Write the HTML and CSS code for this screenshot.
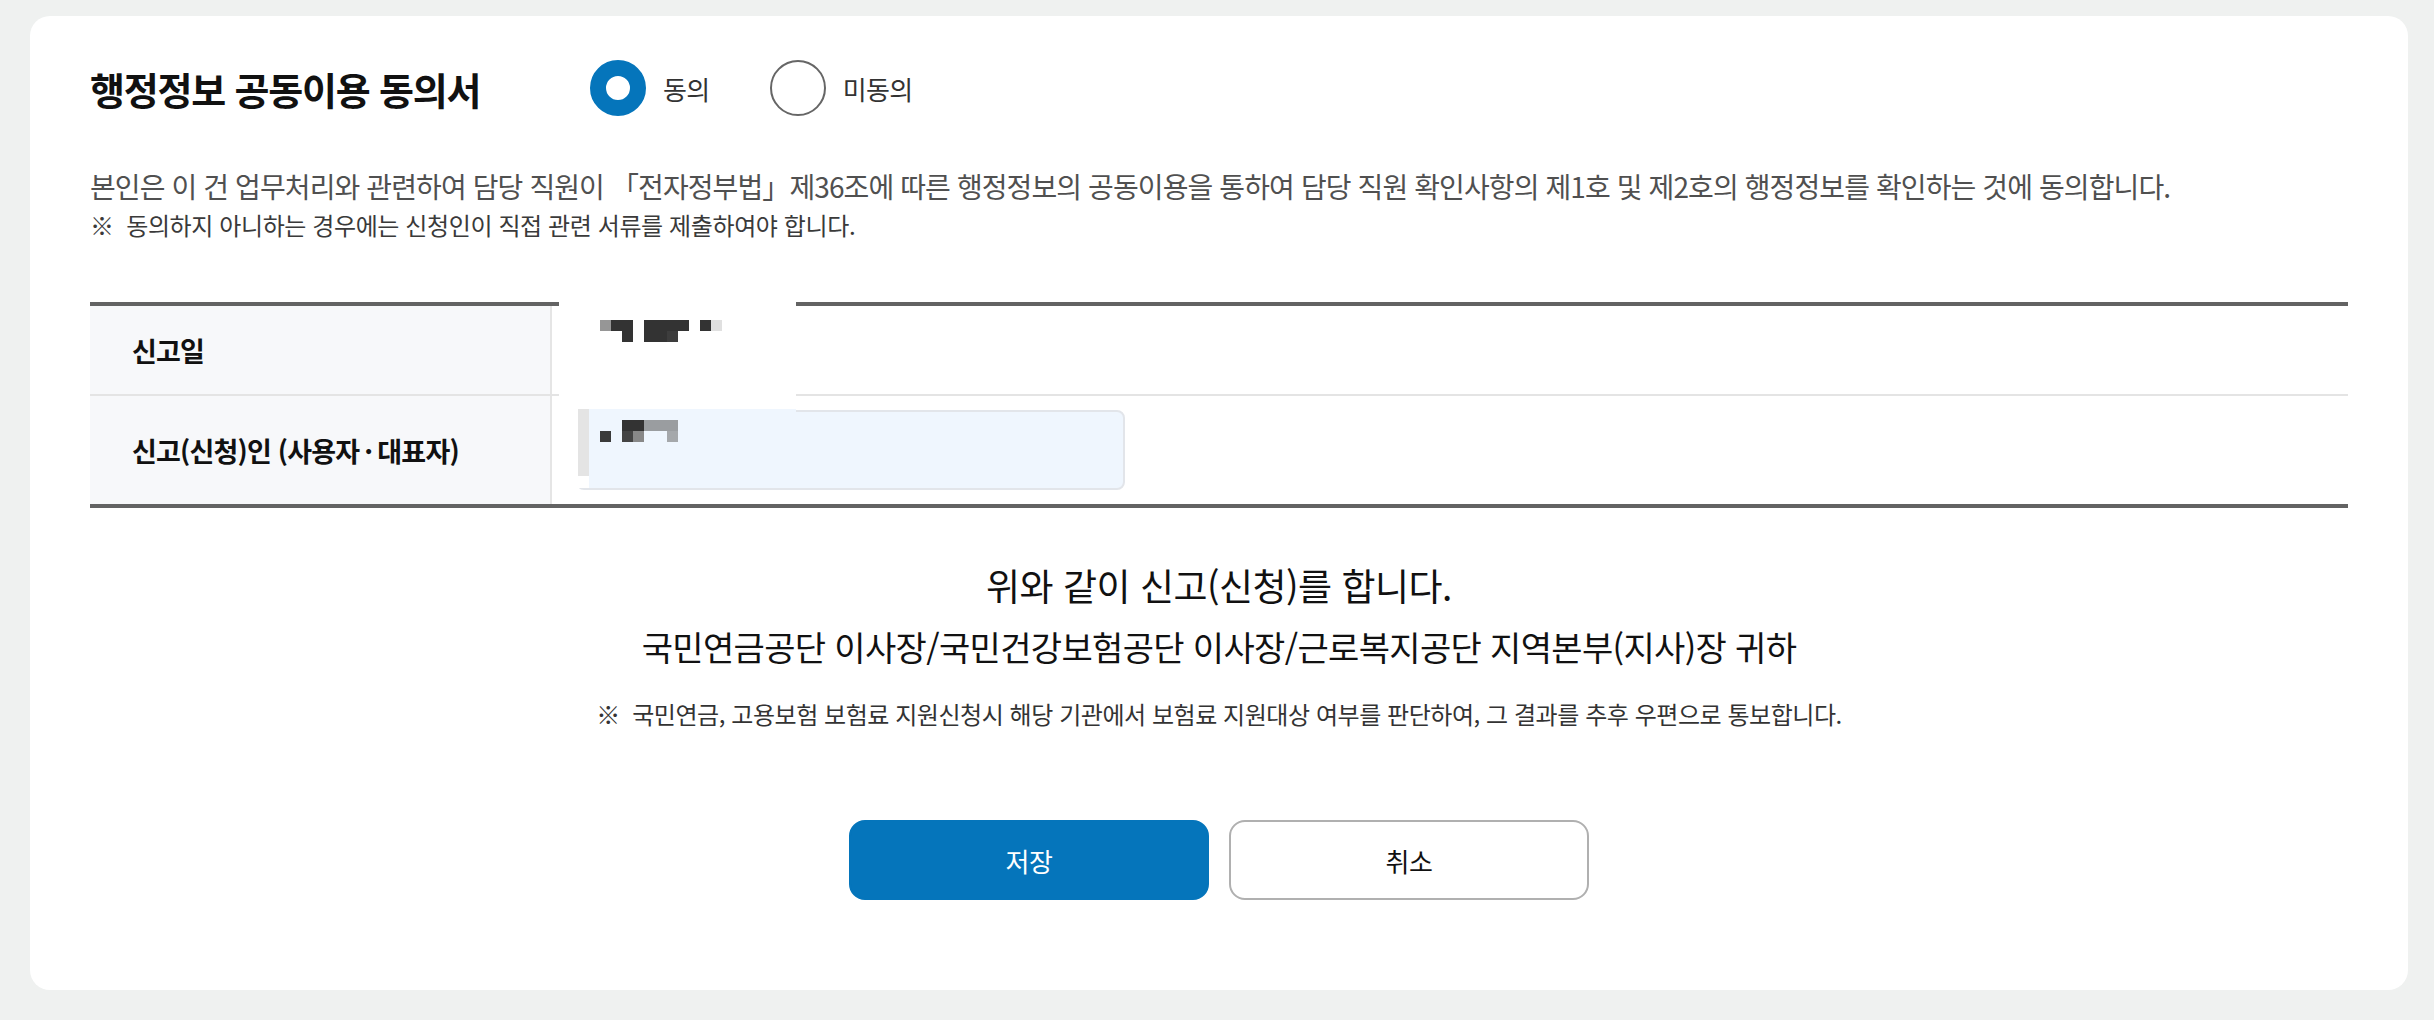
FILE: index.html
```html
<!DOCTYPE html>
<html lang="ko">

<head>
    <meta charset="UTF-8">
    <meta name="viewport" content="width=device-width, initial-scale=1.0">
    <title>행정정보 공동이용 동의서</title>
    <link rel="stylesheet" href="styles.css">
</head>

<body>
    <div class="card">
        <div class="head">
            <h2 class="title">행정정보 공동이용 동의서</h2>
            <div class="radios">
                <label class="radio checked"><span class="dot"></span>동의</label>
                <label class="radio"><span class="dot"></span>미동의</label>
            </div>
        </div>

        <p class="desc">본인은 이 건 업무처리와 관련하여 담당 직원이 「전자정부법」제36조에 따른 행정정보의 공동이용을 통하여 담당 직원 확인사항의 제1호 및 제2호의 행정정보를 확인하는 것에 동의합니다.</p>
        <p class="note">※&nbsp; 동의하지 아니하는 경우에는 신청인이 직접 관련 서류를 제출하여야 합니다.</p>

        <div class="formTable">
            <div class="row first">
                <div class="th">신고일</div>
                <div class="td"></div>
            </div>
            <div class="row second">
                <div class="th">신고(신청)인 (사용자<span class="mid">·</span>대표자)</div>
                <div class="td"><div class="inputBox"></div></div>
            </div>

            <!-- 가려진 개인정보 -->
            <svg class="masked" width="237" height="186" viewBox="0 0 237 186">
                <rect x="0" y="0" width="237" height="186" fill="#fff" />
                <rect x="41" y="18" width="11" height="11" fill="#969696" />
                <rect x="52" y="18" width="22" height="11" fill="#333" />
                <rect x="63" y="29" width="11" height="11" fill="#333" />
                <rect x="85" y="18" width="45" height="11" fill="#333" />
                <rect x="85" y="29" width="23" height="11" fill="#333" />
                <rect x="108" y="29" width="11" height="11" fill="#3d3d3d" />
                <rect x="141" y="18" width="11" height="11" fill="#333" />
                <rect x="152" y="18" width="11" height="11" fill="#e0e0e0" />
                <rect x="19" y="107" width="11" height="67" fill="#e4e4e4" />
                <rect x="30" y="107" width="207" height="79" fill="#eff6fe" />
                <rect x="41" y="129" width="11" height="11" fill="#3a3a3a" />
                <rect x="63" y="118" width="22" height="11" fill="#333" />
                <rect x="85" y="118" width="34" height="11" fill="#9a9da0" />
                <rect x="63" y="129" width="11" height="11" fill="#444" />
                <rect x="74" y="129" width="11" height="11" fill="#888" />
                <rect x="108" y="129" width="11" height="11" fill="#a5a8ab" />
            </svg>
        </div>

        <div class="closing">
            <p class="declare">위와 같이 신고(신청)를 합니다.</p>
            <p class="receiver">국민연금공단 이사장/국민건강보험공단 이사장/근로복지공단 지역본부(지사)장 귀하</p>
            <p class="notice">※&nbsp; 국민연금, 고용보험 보험료 지원신청시 해당 기관에서 보험료 지원대상 여부를 판단하여, 그 결과를 추후 우편으로 통보합니다.</p>
        </div>

        <div class="buttons">
            <button class="btn primary">저장</button>
            <button class="btn">취소</button>
        </div>
    </div>
</body>

</html>
```

FILE: styles.css
```css
body {
    margin: 0;
    padding: 16px 26px 28px 30px;
    background-color: #eff1f0;
    font-family: "Noto Sans CJK KR", "Noto Sans", sans-serif;
    color: #111;
}

p {
    margin: 0;
}

.card {
    background-color: #fff;
    border-radius: 20px;
    padding: 44px 60px 90px 60px;
}

/* 제목 + 동의 선택 */
.head {
    display: flex;
    align-items: center;
    height: 56px;
}

.title {
    margin: 0;
    width: 500px;
    font-size: 38px;
    font-weight: 700;
    letter-spacing: -1.2px;
    color: #111;
}

.radios {
    display: flex;
    align-items: center;
    gap: 60px;
}

.radio {
    display: flex;
    align-items: center;
    gap: 17px;
    font-size: 26px;
    letter-spacing: -0.6px;
    color: #333;
}

.radio .dot {
    width: 52px;
    height: 52px;
    border: 2px solid #666;
    border-radius: 50%;
    background-color: #fff;
}

.radio.checked .dot {
    width: 24px;
    height: 24px;
    border: 16px solid #0575bb;
}

.desc {
    margin-top: 50px;
    font-size: 28px;
    line-height: 40px;
    letter-spacing: -0.9px;
    color: #505050;
}

.note {
    margin-top: 2px;
    font-size: 24px;
    line-height: 34px;
    letter-spacing: -0.4px;
    color: #3a3a3a;
}

/* 신고 정보 표 */
.formTable {
    position: relative;
    margin-top: 60px;
    border-top: 4px solid #636363;
    border-bottom: 4px solid #636363;
}

.row {
    display: flex;
}

.row.second {
    border-top: 2px solid #e4e4e4;
}

.th {
    width: 418px;
    padding-left: 42px;
    display: flex;
    align-items: center;
    background-color: #f7f8fa;
    border-right: 2px solid #e5e5e5;
    font-size: 27px;
    font-weight: 700;
    letter-spacing: -0.8px;
    color: #111;
}

.th .mid {
    margin: 0 5px;
}

.row.first .th,
.row.first .td {
    height: 88px;
}

.td {
    flex: 1;
    padding: 14px 24px;
}

.row.first .td {
    padding: 0;
}

.inputBox {
    width: 545px;
    height: 76px;
    border: 2px solid #e2e5ea;
    border-radius: 8px;
    background-color: #eff6fe;
}

.masked {
    position: absolute;
    left: 469px;
    top: -4px;
    display: block;
}

/* 하단 문구 */
.closing {
    margin-top: 52px;
    text-align: center;
}

.declare {
    font-size: 37px;
    line-height: 50px;
    letter-spacing: -0.5px;
    color: #111;
}

.receiver {
    margin-top: 12px;
    font-size: 34px;
    line-height: 50px;
    letter-spacing: -0.65px;
    color: #111;
}

.notice {
    margin-top: 25px;
    font-size: 24px;
    line-height: 34px;
    letter-spacing: -0.45px;
    color: #333;
}

.buttons {
    margin-top: 89px;
    display: flex;
    justify-content: center;
    gap: 20px;
}

.btn {
    width: 360px;
    height: 80px;
    border: 2px solid #b0b0b0;
    border-radius: 16px;
    background-color: #fff;
    font-family: inherit;
    font-size: 26px;
    letter-spacing: -0.5px;
    color: #111;
    cursor: pointer;
}

.btn.primary {
    border-color: #0575bb;
    background-color: #0575bb;
    color: #fff;
}
```
